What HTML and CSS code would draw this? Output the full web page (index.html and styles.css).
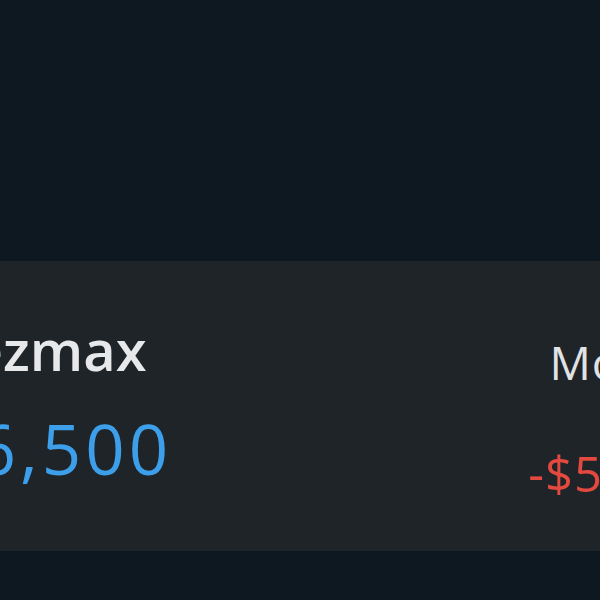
FILE: index.html
```html
<!DOCTYPE html>
<html>
<head>
<meta charset="utf-8">
<link rel="stylesheet" href="styles.css">
</head>
<body>
<div class="page">
  <div class="card">
    <div class="main">
      <div class="name">Rezmax</div>
      <div class="amount">$6,500</div>
    </div>
    <div class="side">
      <div class="label">Monthly</div>
      <div class="change">-$500.00</div>
    </div>
  </div>
</div>
</body>
</html>
```
FILE: styles.css
```css
html, body {
  margin: 0;
  padding: 0;
  background: #0d1821;
}
.page {
  width: 600px;
  height: 600px;
  overflow: hidden;
  padding-top: 261px;
  box-sizing: border-box;
  font-family: "Open Sans", "Noto Sans", sans-serif;
}
.card {
  display: flex;
  justify-content: space-between;
  margin: 0 -150px 0 -100px;
  height: 290px;
  background: #1f2429;
  padding: 60px 17px 0 35px;
  box-sizing: border-box;
}
.main, .side {
  display: flex;
  flex-direction: column;
}
.side {
  align-items: flex-end;
  padding-top: 18px;
}
.name {
  font-size: 56px;
  line-height: 1;
  font-weight: 600;
  color: #e6e8ea;
  white-space: nowrap;
}
.amount {
  margin-top: 37px;
  font-size: 69px;
  line-height: 1;
  font-weight: 500;
  letter-spacing: 4px;
  margin-left: -2px;
  color: #3d9fe9;
  white-space: nowrap;
}
.label {
  font-size: 46px;
  line-height: 1;
  letter-spacing: 1px;
  color: #e0e2e4;
  white-space: nowrap;
}
.change {
  margin-top: 64px;
  font-size: 49px;
  line-height: 1;
  letter-spacing: 1px;
  color: #e4493f;
  white-space: nowrap;
}
```
